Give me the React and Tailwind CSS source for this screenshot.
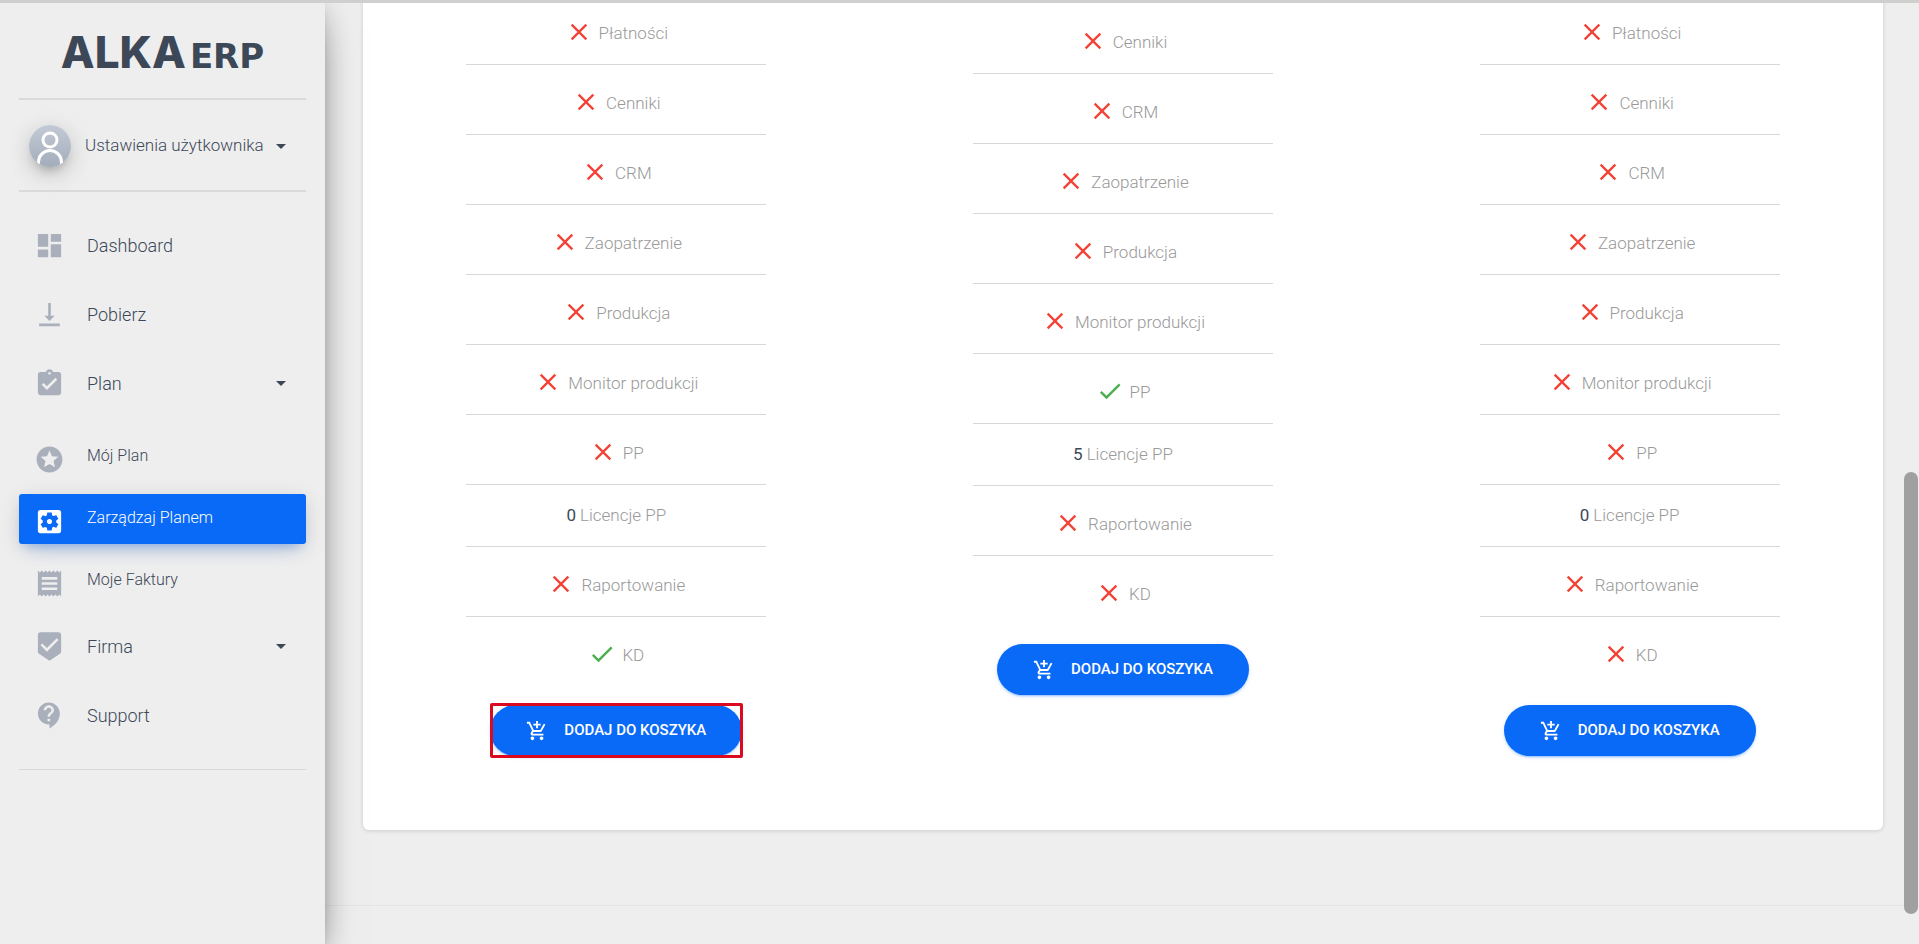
import { useState } from "react";
import {
  MdAddShoppingCart,
  MdAssignmentTurnedIn,
  MdBeenhere,
  MdCheck,
  MdClose,
  MdContactSupport,
  MdDashboard,
  MdReceipt,
  MdSettingsApplications,
  MdStars,
  MdVerticalAlignBottom,
} from "react-icons/md";

const navItems = [
  { label: "Dashboard", icon: MdDashboard },
  { label: "Pobierz", icon: MdVerticalAlignBottom },
  {
    label: "Plan",
    icon: MdAssignmentTurnedIn,
    children: [
      { label: "Mój Plan", icon: MdStars },
      { label: "Zarządzaj Planem", icon: MdSettingsApplications },
      { label: "Moje Faktury", icon: MdReceipt },
    ],
  },
  { label: "Firma", icon: MdBeenhere, children: [] },
  { label: "Support", icon: MdContactSupport },
];

const plans = [
  {
    id: "kd",
    highlighted: true,
    features: [
      { name: "Płatności", included: false },
      { name: "Cenniki", included: false },
      { name: "CRM", included: false },
      { name: "Zaopatrzenie", included: false },
      { name: "Produkcja", included: false },
      { name: "Monitor produkcji", included: false },
      { name: "PP", included: false },
      { name: "Licencje PP", count: 0 },
      { name: "Raportowanie", included: false },
      { name: "KD", included: true },
    ],
  },
  {
    id: "pp",
    shifted: true,
    features: [
      { name: "Cenniki", included: false },
      { name: "CRM", included: false },
      { name: "Zaopatrzenie", included: false },
      { name: "Produkcja", included: false },
      { name: "Monitor produkcji", included: false },
      { name: "PP", included: true },
      { name: "Licencje PP", count: 5 },
      { name: "Raportowanie", included: false },
      { name: "KD", included: false },
    ],
  },
  {
    id: "basic",
    features: [
      { name: "Płatności", included: false },
      { name: "Cenniki", included: false },
      { name: "CRM", included: false },
      { name: "Zaopatrzenie", included: false },
      { name: "Produkcja", included: false },
      { name: "Monitor produkcji", included: false },
      { name: "PP", included: false },
      { name: "Licencje PP", count: 0 },
      { name: "Raportowanie", included: false },
      { name: "KD", included: false },
    ],
  },
];

function Caret() {
  return (
    <span className="h-0 w-0 border-x-5 border-t-5 border-x-transparent border-t-[#3c4858]" />
  );
}

function Avatar() {
  return (
    <span className="h-[42px] w-[42px] shrink-0 overflow-hidden rounded-full bg-linear-to-b from-[#c3cad5] to-[#a3adbb] shadow-[0_10px_30px_-12px_rgba(0,0,0,0.42),0_4px_25px_0_rgba(0,0,0,0.12),0_8px_10px_-5px_rgba(0,0,0,0.2)]">
      <svg viewBox="0 0 42 42" fill="none" stroke="#fff" strokeWidth="3">
        <circle cx="21" cy="15" r="7" />
        <path d="M9.500 39v-2a11.500 11.500 0 0 1 23 0v2" />
      </svg>
    </span>
  );
}

function Sidebar() {
  const [active, setActive] = useState("Zarządzaj Planem");

  return (
    <aside className="relative z-10 w-[325px] shrink-0 bg-[#eee] px-[19px] shadow-[0_16px_38px_-12px_rgba(0,0,0,0.56),0_4px_25px_0_rgba(0,0,0,0.12),0_8px_10px_-5px_rgba(0,0,0,0.2)]">
      <a
        href="#"
        className="flex h-[100px] items-baseline justify-center gap-1 border-b-2 border-[#dadada] pt-[19px] text-[#3c4858]"
      >
        <span className="font-['Inter',sans-serif] text-[44px] leading-[66px] font-extrabold">
          ALKA
        </span>
        <span className="font-['DejaVu_Sans',sans-serif] text-[34px] font-bold">ERP</span>
      </a>

      <button
        type="button"
        className="flex h-[92px] w-full items-center border-b-2 border-[#dadada] pt-[2px] pl-[10px] text-left"
      >
        <Avatar />
        <span className="mr-3 ml-[14px] text-[17px]">Ustawienia użytkownika</span>
        <Caret />
      </button>

      <nav className="flex flex-col gap-[19px] border-b border-[#d8d8d8] pt-[28px] pb-[29px]">
        {navItems.map(({ label, icon: Icon, children }) => (
          <div key={label}>
            <a href="#" className="flex h-[50px] items-center pr-5 pl-[15px]">
              <Icon className="size-[31px] text-[#a9afbb]" />
              <span className="ml-[22px] flex-1 text-[18px]">{label}</span>
              {children && <Caret />}
            </a>

            {children?.length > 0 && (
              <ul className="mt-6 -mb-1 flex flex-col gap-3">
                {children.map(({ label: name, icon: ChildIcon }) => (
                  <li key={name}>
                    <a
                      href="#"
                      onClick={() => setActive(name)}
                      className={
                        active === name
                          ? "flex h-[50px] items-center rounded-[3px] bg-[#0a6af8] pl-[15px] text-white shadow-[0_12px_20px_-10px_rgba(10,106,248,0.28),0_4px_20px_0_rgba(0,0,0,0.12),0_7px_8px_-5px_rgba(10,106,248,0.2)]"
                          : "flex h-[50px] items-center pl-[15px]"
                      }
                    >
                      <ChildIcon
                        className={
                          active === name
                            ? "mt-1 size-[31px]"
                            : "mt-1 size-[31px] text-[#a9afbb]"
                        }
                      />
                      <span className="ml-[22px] pb-[2px] text-[16px]">{name}</span>
                    </a>
                  </li>
                ))}
              </ul>
            )}
          </div>
        ))}
      </nav>
    </aside>
  );
}

function Feature({ feature }) {
  if (feature.count !== undefined) {
    return (
      <li className="flex h-[62px] items-center justify-center gap-1 border-b border-[#d8d8d8]">
        <b className="font-normal text-[#3c4858]">{feature.count}</b>
        {feature.name}
      </li>
    );
  }

  return (
    <li className="flex h-[70px] items-center justify-center gap-[6px] border-b border-[#d8d8d8] pt-[8px] last:border-b-0">
      {feature.included ? (
        <MdCheck className="-mt-1 size-[28px] text-[#4caf50]" />
      ) : (
        <MdClose className="-mt-1 size-[28px] text-[#f44336]" />
      )}
      {feature.name}
    </li>
  );
}

function Plan({ plan }) {
  return (
    <section
      className={
        plan.shifted ? "flex flex-col items-center pt-[9px]" : "flex flex-col items-center"
      }
    >
      <ul className="w-[300px] text-[17px] text-[#999]">
        {plan.features.map((feature) => (
          <Feature key={feature.name} feature={feature} />
        ))}
      </ul>

      <div className="relative mt-[18px]">
        <button
          type="button"
          className="flex h-[51px] w-[252px] items-center justify-center gap-4 rounded-full bg-[#0a6af8] text-[15px] font-medium text-white uppercase shadow-[0_2px_2px_0_rgba(10,106,248,0.14),0_3px_1px_-2px_rgba(10,106,248,0.2),0_1px_5px_0_rgba(10,106,248,0.12)]"
        >
          <MdAddShoppingCart className="size-[22px]" />
          Dodaj do koszyka
        </button>
        {plan.highlighted && (
          <span className="pointer-events-none absolute -inset-y-[2px] -right-px left-0 rounded-[2px] border-3 border-[#dc0a1e]" />
        )}
      </div>
    </section>
  );
}

export default function App() {
  return (
    <div className="relative flex h-screen overflow-hidden bg-[#eee] font-['Roboto',sans-serif] font-light text-[#3c4858]">
      <div className="absolute inset-x-0 top-0 z-20 h-[3px] bg-[#cdd0cd]" />
      <Sidebar />

      <main className="flex min-w-0 flex-1 flex-col">
        {/* the list is scrolled down, its first row is cut by the top edge */}
        <div className="-mt-[5px] mr-9 ml-[38px] grid grid-cols-3 rounded-b-[6px] bg-white pb-[74px] shadow-[0_1px_4px_0_rgba(0,0,0,0.14)]">
          {plans.map((plan) => (
            <Plan key={plan.id} plan={plan} />
          ))}
        </div>
        <footer className="mt-[75px] border-t border-[#e4e4e4]" />
      </main>

      <div className="absolute top-[472px] right-px z-20 h-[442px] w-[14px] rounded-full bg-[#a0a0a0]" />
    </div>
  );
}
